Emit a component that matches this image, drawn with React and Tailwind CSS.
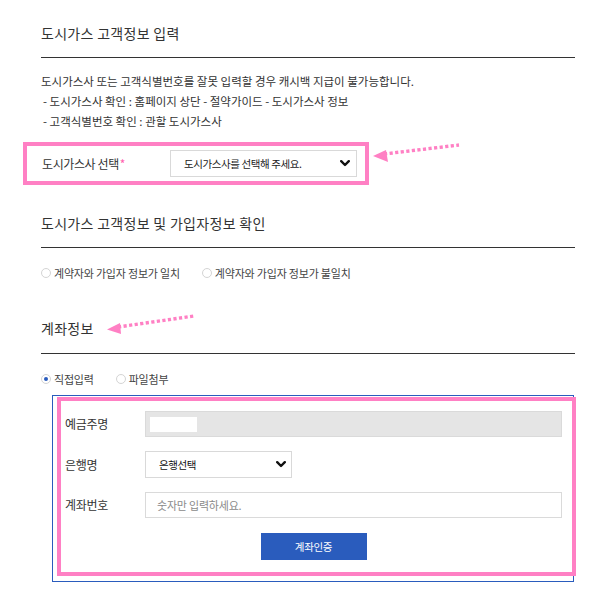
import React from 'react';

const font = { fontFamily: '"Noto Sans CJK KR", "Noto Sans", sans-serif' };

const Chevron = () => (
    <svg width="10" height="7" viewBox="0 0 10 7" className="shrink-0">
        <path d="M1.2 1.2 L5 5 L8.8 1.2" fill="none" stroke="#111" strokeWidth="2.4" strokeLinecap="round" strokeLinejoin="round" />
    </svg>
);

const Radio = ({checked, label}) => (
    <label className="flex items-center gap-[3px] text-[11px] tracking-[-0.2px] text-[#444] leading-[16px]">
        <span className="w-[10px] h-[10px] rounded-full border border-[#d4d4d4] bg-white flex items-center justify-center">
            {checked && <span className="w-[4px] h-[4px] rounded-full bg-[#2a5cbd]" />}
        </span>
        {label}
    </label>
);

const SectionTitle = ({children}) => (
    <h3 className="text-[14px] leading-[20px] text-[#333] pb-[14px] border-b border-[#333] tracking-[0.3px]">
        {children}
    </h3>
);

// pink annotation arrows drawn over the page
const Arrows = () => (
    <svg className="absolute left-0 top-0 pointer-events-none" width="603" height="602">
        <g fill="#ff80c4" stroke="#ff80c4">
            <line x1="384" y1="154" x2="459" y2="145" strokeWidth="3.4" strokeDasharray="3.2 2.4" fill="none" />
            <polygon points="373,156 386,150 388,162" stroke="none" />
            <line x1="118" y1="327" x2="194" y2="316" strokeWidth="3.4" strokeDasharray="3.2 2.4" fill="none" />
            <polygon points="107,329.5 120,323 121,334" stroke="none" />
        </g>
    </svg>
);

export default function App() {
    return (
        <div className="relative w-[603px] min-h-[602px] bg-white text-[#333]" style={font}>
            <div className="pl-[41px] pr-[28px] pt-[23px]">
                <SectionTitle>도시가스 고객정보 입력</SectionTitle>

                <div className="mt-[13px] text-[11.5px] leading-[20px] tracking-[0px] text-[#333]">
                    <p>도시가스사 또는 고객식별번호를 잘못 입력할 경우 캐시백 지급이 불가능합니다.</p>
                    <p className="pl-[2px]">- 도시가스사 확인 : 홈페이지 상단 - 절약가이드 - 도시가스사 정보</p>
                    <p className="pl-[2px]">- 고객식별번호 확인 : 관할 도시가스사</p>
                </div>

                <div className="mt-[11px] -ml-[18px] w-[346px] h-[43px] border-4 border-[#ff80c4] flex items-center pl-[15px]">
                    <span className="w-[128px] text-[12px] tracking-[-0.4px] text-[#333]">
                        도시가스사 선택<span className="text-[#ff5fae] ml-[1px]">*</span>
                    </span>
                    <div className="w-[187px] h-[27px] border border-[#d9d9d9] flex items-center justify-between pl-[13px] pr-[6px]">
                        <span className="text-[10.5px] tracking-[-0.4px] text-[#222]">도시가스사를 선택해 주세요.</span>
                        <Chevron />
                    </div>
                </div>

                <div className="mt-[28px]">
                    <SectionTitle>도시가스 고객정보 및 가입자정보 확인</SectionTitle>
                </div>
                <div className="mt-[17px] flex gap-[22px]">
                    <Radio label="계약자와 가입자 정보가 일치" />
                    <Radio label="계약자와 가입자 정보가 불일치" />
                </div>

                <div className="mt-[37px]">
                    <h3 className="text-[14px] leading-[20px] text-[#333] pb-[15px] border-b border-[#333] tracking-[0.3px]">계좌정보</h3>
                </div>
                <div className="mt-[17px] flex gap-[22px]">
                    <Radio checked label="직접입력" />
                    <Radio label="파일첨부" />
                </div>

                <div className="relative mt-[8px] ml-[11px] w-[522px] border border-[#2a5cbd] pl-[12px] pr-[11px] pt-[15px] pb-[21px]">
                    <div className="flex flex-col gap-[14px]">
                        <div className="flex items-center">
                            <span className="w-[80px] text-[12px] tracking-[-0.3px]">예금주명</span>
                            <div className="flex-1 h-[26px] bg-[#e5e5e5] border border-[#dadada] flex items-center pl-[4px]">
                                <div className="w-[47px] h-[15px] bg-white" />
                            </div>
                        </div>
                        <div className="flex items-center">
                            <span className="w-[80px] text-[12px] tracking-[-0.3px]">은행명</span>
                            <div className="w-[147px] h-[27px] border border-[#d9d9d9] flex items-center justify-between pl-[13px] pr-[5px]">
                                <span className="text-[10.5px] tracking-[-0.4px] text-[#111]">은행선택</span>
                                <Chevron />
                            </div>
                        </div>
                        <div className="flex items-center">
                            <span className="w-[80px] text-[12px] tracking-[-0.3px]">계좌번호</span>
                            <div className="flex-1 h-[26px] border border-[#dadada] flex items-center pl-[11px]">
                                <span className="text-[11px] tracking-[-0.2px] text-[#8a8a8a]">숫자만 입력하세요.</span>
                            </div>
                        </div>
                    </div>
                    <div className="mt-[15px] flex justify-center">
                        <button className="w-[106px] h-[27px] bg-[#2a5cbd] text-white text-[10.5px] tracking-[-0.3px]">계좌인증</button>
                    </div>
                    <div className="absolute left-[4px] top-[1px] w-[519px] h-[179px] border-4 border-[#ff80c4] pointer-events-none" />
                </div>
            </div>
            <Arrows />
        </div>
    );
}
